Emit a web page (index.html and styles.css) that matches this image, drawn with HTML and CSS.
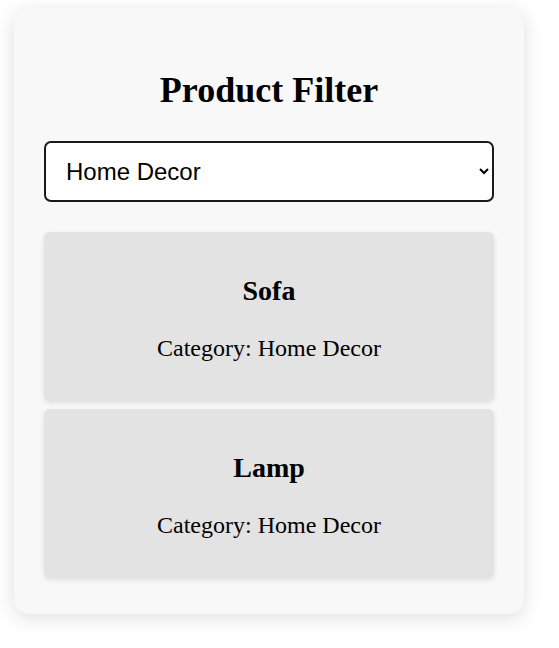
FILE: index.html
```html
<!doctype html>
<html lang="en">
 <head>
  <meta charset="UTF-8">
  <title>Product Filter</title>
  <link rel="stylesheet" href="styles.css">
 </head>
 <body>
  <div class="container">
	<h1>Product Filter</h1>
	<!--分类筛选-->
	<select id="category" class="filter">
		<option value="all">All</option>
		<option value="electronics">Electronics</option>
		<option value="clothing">Clothing</option>
		<option value="home" selected>Home Decor</option>
	</select>
	<div id="list">
		<div class="product">
			<h3>Sofa</h3>
			<p>Category: Home Decor</p>
		</div>
		<div class="product">
			<h3>Lamp</h3>
			<p>Category: Home Decor</p>
		</div>
	</div>
  </div>
 </body>
</html>
```

FILE: styles.css
```css
html,body{min-height:100%;}
body{margin:0;min-height:100vh;background:#fff;font-family:"Liberation Serif","Times New Roman",serif;overflow:hidden;}
.container{width:450px;margin:8px 14px;padding:30px;background:#f8f8f8;border-radius:15px;box-shadow:0 4px 20px rgba(0,0,0,.13);}
h1{font-size:36px;text-align:center;margin:31px 0 30px;}
.filter{display:block;box-sizing:border-box;width:450px;height:61px;padding:0 16px;font-size:24px;font-family:"Liberation Sans",Arial,sans-serif;color:#000;background:#fff;border:2px solid #1a1a1a;border-radius:7px;margin-bottom:30px;}
.product{background:#e3e3e3;border-radius:6px;padding:15px 10px;margin-bottom:8px;text-align:center;box-shadow:0 2px 5px rgba(0,0,0,.1);}
.product:last-child{margin-bottom:6px;}
.product h3{font-size:28px;margin:28px 0;}
.product p{font-size:24px;margin:24px 0;}
```
